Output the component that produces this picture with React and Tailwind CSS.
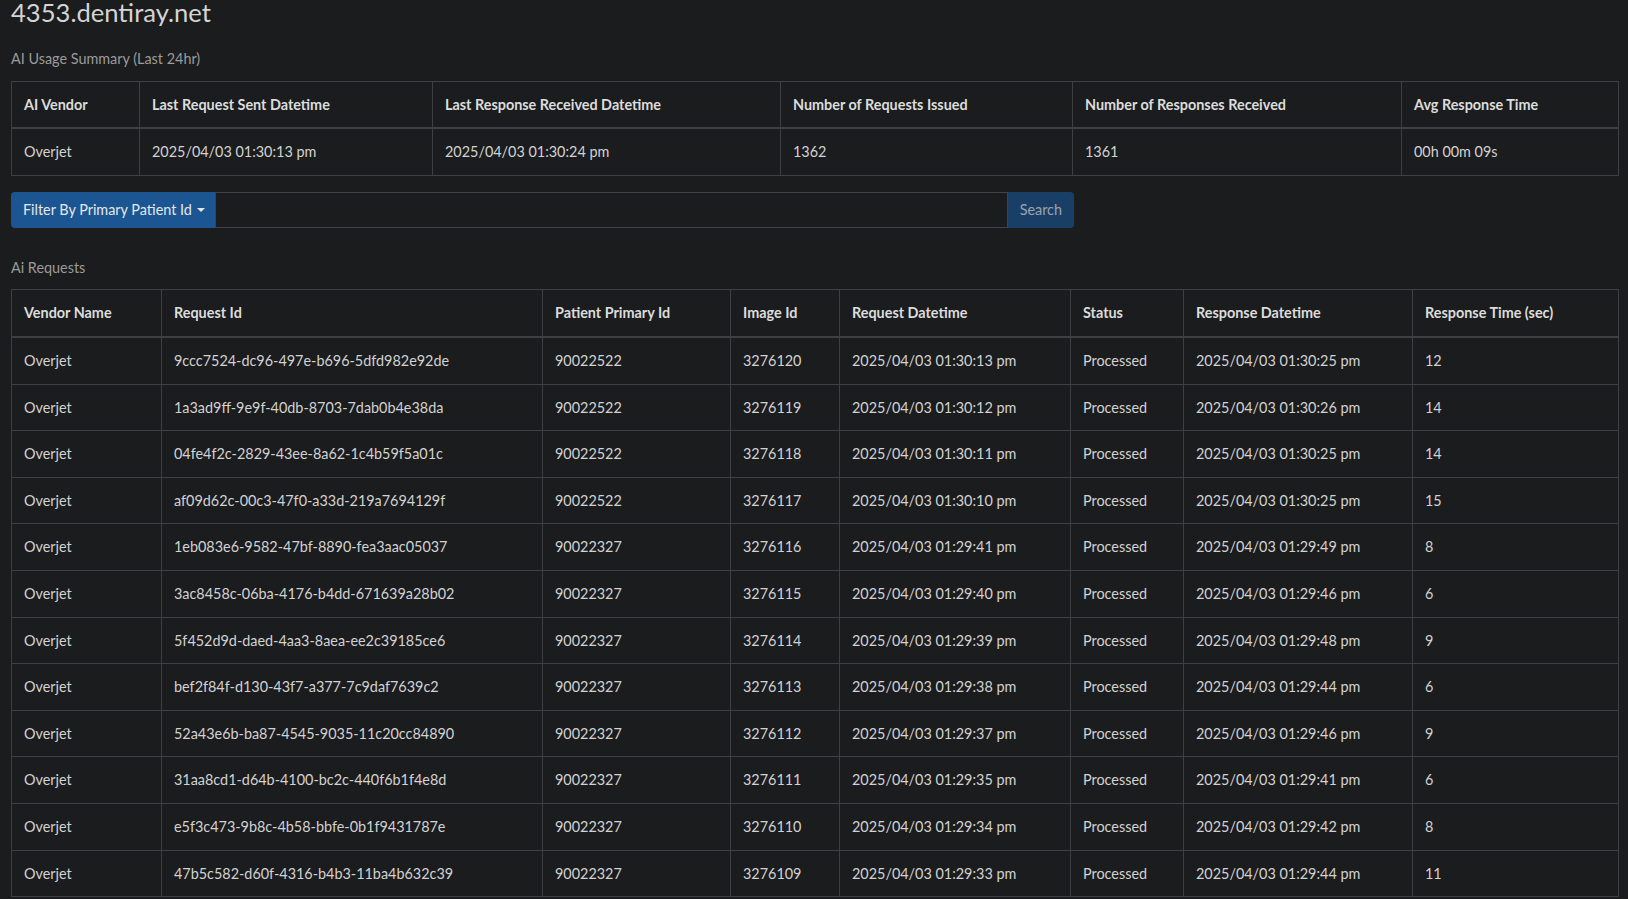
import React from 'react';

const summary = {
  vendor: 'Overjet',
  lastSent: '2025/04/03 01:30:13 pm',
  lastReceived: '2025/04/03 01:30:24 pm',
  issued: '1362',
  received: '1361',
  avg: '00h 00m 09s',
};

const requests = [
  ['9ccc7524-dc96-497e-b696-5dfd982e92de', '90022522', '3276120', '2025/04/03 01:30:13 pm', '2025/04/03 01:30:25 pm', '12'],
  ['1a3ad9ff-9e9f-40db-8703-7dab0b4e38da', '90022522', '3276119', '2025/04/03 01:30:12 pm', '2025/04/03 01:30:26 pm', '14'],
  ['04fe4f2c-2829-43ee-8a62-1c4b59f5a01c', '90022522', '3276118', '2025/04/03 01:30:11 pm', '2025/04/03 01:30:25 pm', '14'],
  ['af09d62c-00c3-47f0-a33d-219a7694129f', '90022522', '3276117', '2025/04/03 01:30:10 pm', '2025/04/03 01:30:25 pm', '15'],
  ['1eb083e6-9582-47bf-8890-fea3aac05037', '90022327', '3276116', '2025/04/03 01:29:41 pm', '2025/04/03 01:29:49 pm', '8'],
  ['3ac8458c-06ba-4176-b4dd-671639a28b02', '90022327', '3276115', '2025/04/03 01:29:40 pm', '2025/04/03 01:29:46 pm', '6'],
  ['5f452d9d-daed-4aa3-8aea-ee2c39185ce6', '90022327', '3276114', '2025/04/03 01:29:39 pm', '2025/04/03 01:29:48 pm', '9'],
  ['bef2f84f-d130-43f7-a377-7c9daf7639c2', '90022327', '3276113', '2025/04/03 01:29:38 pm', '2025/04/03 01:29:44 pm', '6'],
  ['52a43e6b-ba87-4545-9035-11c20cc84890', '90022327', '3276112', '2025/04/03 01:29:37 pm', '2025/04/03 01:29:46 pm', '9'],
  ['31aa8cd1-d64b-4100-bc2c-440f6b1f4e8d', '90022327', '3276111', '2025/04/03 01:29:35 pm', '2025/04/03 01:29:41 pm', '6'],
  ['e5f3c473-9b8c-4b58-bbfe-0b1f9431787e', '90022327', '3276110', '2025/04/03 01:29:34 pm', '2025/04/03 01:29:42 pm', '8'],
  ['47b5c582-d60f-4316-b4b3-11ba4b632c39', '90022327', '3276109', '2025/04/03 01:29:33 pm', '2025/04/03 01:29:44 pm', '11'],
];

const th = 'border border-[#3c3f43] px-3 py-3 text-left font-bold text-[#dcdcdc] leading-[21.6px]';
const td = 'border border-[#3c3f43] px-3 py-3 text-[#d2d2d2] leading-[21.6px]';

export default function App() {
  return (
    <div
      className="min-h-screen bg-[#1b1c1e] pl-[11px] pr-[9px] text-[14.4px] text-[#d2d2d2]"
      style={{ fontFamily: '"Lato", "Open Sans", sans-serif' }}
    >
      <h3 className="text-[25.6px] leading-[25px] text-[#d4d4d4]">4353.dentiray.net</h3>

      <div className="mt-[23px] text-[#9a9a9a] leading-[21.6px]">AI Usage Summary (Last 24hr)</div>

      {/* Summary table */}
      <table className="mt-[11px] w-full table-fixed border-collapse">
        <colgroup>
          <col className="w-[128px]" />
          <col className="w-[293px]" />
          <col className="w-[348px]" />
          <col className="w-[292px]" />
          <col className="w-[329px]" />
          <col />
        </colgroup>
        <thead>
          <tr className="border-b-2 border-[#3c3f43]">
            <th className={th}>AI Vendor</th>
            <th className={th}>Last Request Sent Datetime</th>
            <th className={th}>Last Response Received Datetime</th>
            <th className={th}>Number of Requests Issued</th>
            <th className={th}>Number of Responses Received</th>
            <th className={th}>Avg Response Time</th>
          </tr>
        </thead>
        <tbody>
          <tr>
            <td className={td}>{summary.vendor}</td>
            <td className={td}>{summary.lastSent}</td>
            <td className={td}>{summary.lastReceived}</td>
            <td className={td}>{summary.issued}</td>
            <td className={td}>{summary.received}</td>
            <td className={td}>{summary.avg}</td>
          </tr>
        </tbody>
      </table>

      {/* Filter input group */}
      <div className="mt-[16px] flex h-[36px] w-[1063px]">
        <button className="flex items-center gap-[5px] rounded-l-[4px] bg-[#1b5693] pl-[12px] pr-[10px] text-[#e6e6e6]">
          Filter By Primary Patient Id
          <span className="mt-[1px] border-x-[4px] border-t-[4.5px] border-x-transparent border-t-[#e6e6e6]" />
        </button>
        <input className="flex-1 border border-[#3f4246] bg-[#1b1c1e] px-3 outline-none" />
        <button className="rounded-r-[4px] bg-[#1a3f67] px-[12px] text-[#9aa4ae]">Search</button>
      </div>

      <div className="mt-[29px] text-[#9a9a9a] leading-[21.6px]">Ai Requests</div>

      {/* Requests table */}
      <table className="mt-[11px] w-full table-fixed border-collapse">
        <colgroup>
          <col className="w-[150px]" />
          <col className="w-[381px]" />
          <col className="w-[188px]" />
          <col className="w-[109px]" />
          <col className="w-[231px]" />
          <col className="w-[113px]" />
          <col className="w-[229px]" />
          <col />
        </colgroup>
        <thead>
          <tr className="border-b-2 border-[#3c3f43]">
            <th className={th}>Vendor Name</th>
            <th className={th}>Request Id</th>
            <th className={th}>Patient Primary Id</th>
            <th className={th}>Image Id</th>
            <th className={th}>Request Datetime</th>
            <th className={th}>Status</th>
            <th className={th}>Response Datetime</th>
            <th className={th}>Response Time (sec)</th>
          </tr>
        </thead>
        <tbody>
          {requests.map((r) => (
            <tr key={r[0]}>
              <td className={td}>Overjet</td>
              <td className={td}>{r[0]}</td>
              <td className={td}>{r[1]}</td>
              <td className={td}>{r[2]}</td>
              <td className={td}>{r[3]}</td>
              <td className={td}>Processed</td>
              <td className={td}>{r[4]}</td>
              <td className={td}>{r[5]}</td>
            </tr>
          ))}
        </tbody>
      </table>
    </div>
  );
}
